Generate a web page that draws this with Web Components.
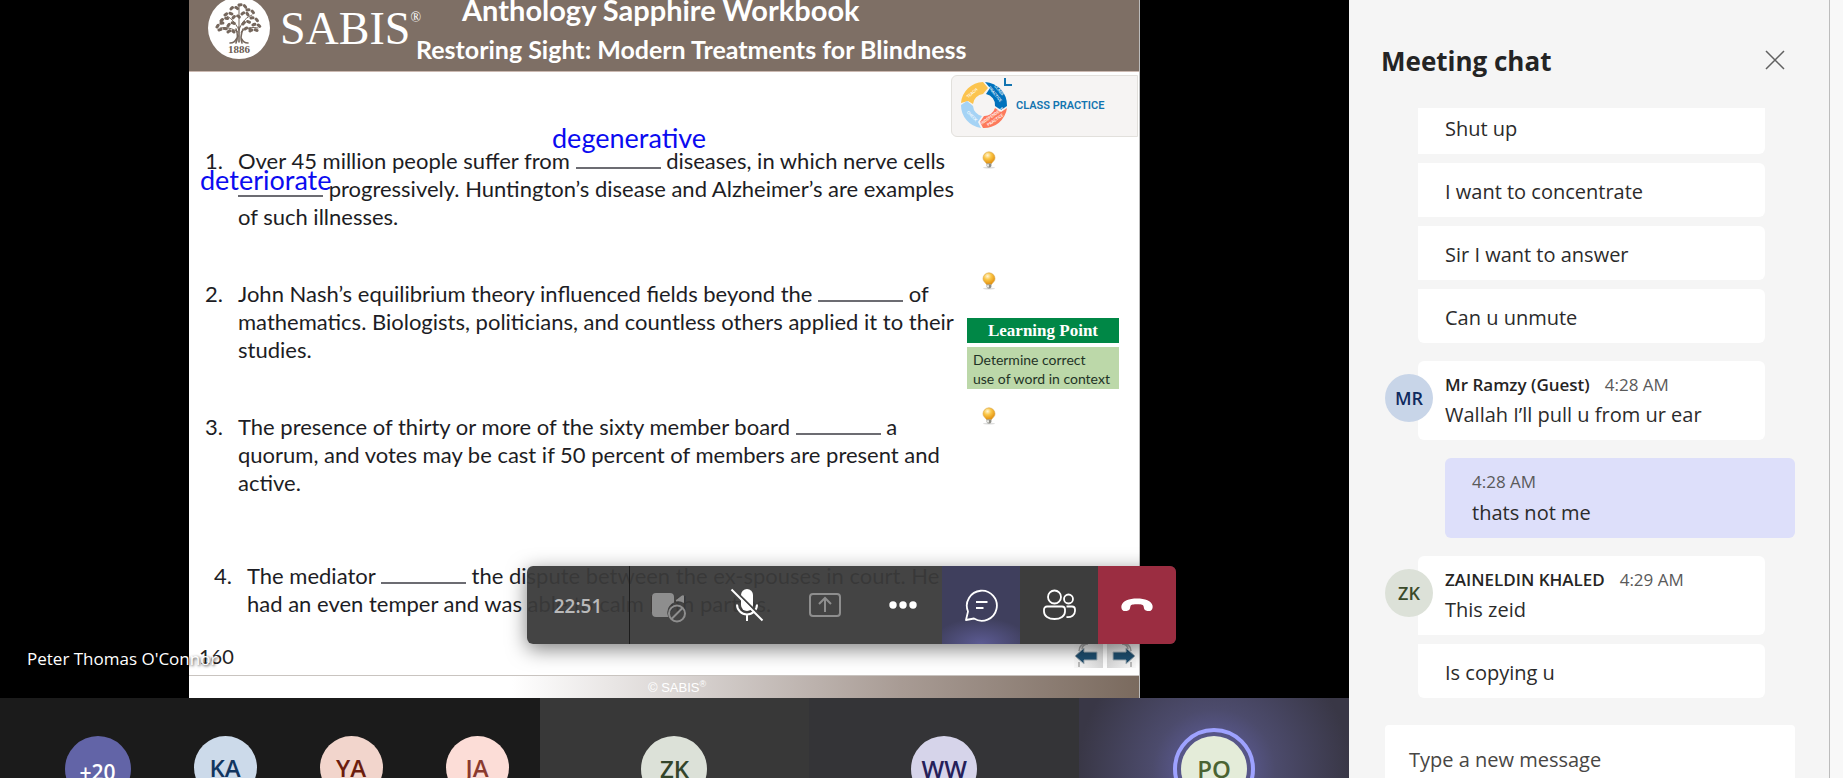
<!DOCTYPE html>
<html lang="en">
<head>
<meta charset="utf-8">
<title>Meeting</title>
<style>
html, body { margin: 0; height: 100%; }
body { font-family: "Open Sans", "Noto Sans", sans-serif; overflow: hidden; background: #f8f8f8; }
</style>
</head>
<body>
<meeting-app></meeting-app>

<script>
function define(name, html) {
  const template = document.createElement('template');
  template.innerHTML = html;
  customElements.define(name, class extends HTMLElement {
    constructor() {
      super();
      this.attachShadow({ mode: 'open' }).appendChild(template.content.cloneNode(true));
    }
  });
}

/* ---------- Small pieces ---------- */

define('hint-bulb', `
<style>
:host { display: block; }
button { display: block; padding: 0; border: 0; background: none; width: 16px; height: 18px; }
svg { display: block; }
</style>
<button type="button" aria-label="Show hint">
<svg width="16" height="18" viewBox="0 0 16 18">
  <defs><radialGradient id="g" cx=".38" cy=".3" r=".75"><stop offset="0" stop-color="#fff6d8"/><stop offset=".4" stop-color="#fbc747"/><stop offset="1" stop-color="#e08a08"/></radialGradient></defs>
  <ellipse cx="8" cy="16.6" rx="6" ry="1" fill="#ddd"/>
  <path d="M8 .8a6 6 0 0 0-6 6c0 2.600 2.200 3.800 3.400 5.600h5.200C11.800 10.600 14 9.400 14 6.800a6 6 0 0 0-6-6z" fill="url(#g)" stroke="#d9a84e" stroke-width=".6"/>
  <path d="M5.600 12.400h4.800v2.600L9.200 16.600H6.800L5.600 15z" fill="#8d8d86"/><path d="M6 13.200h2v2.400H6z" fill="#e8e8e4"/>
</svg></button>`);

define('fill-blank', `
<style>
:host { display: inline-block; width: 85px; height: 16px; border-bottom: 2px solid #6c6c72; box-sizing: border-box; }
</style>`);

define('quiz-question', `
<style>
:host { display: grid; grid-template-columns: 33px 1fr; margin-left: 16px; color: #1d1d24;
  font: 22px/28px Lato, Carlito, sans-serif; white-space: nowrap; }
:host([indent]) { margin-left: 25px; }
</style>
<span><slot name="number"></slot></span><div><slot></slot></div>`);

define('class-practice', `
<style>
:host { display: flex; align-items: center; box-sizing: border-box; height: 62px; padding-left: 8px;
  background: #f6f4f3; border: 1px solid #e2e0dc; border-radius: 6px 0 0 6px; font: 600 11px/16px Roboto, sans-serif; color: #1374b0; }
svg { display: block; }
text { font: 500 4px Roboto, sans-serif; fill: #fff; text-anchor: middle; }
</style>
<svg width="56" height="58" viewBox="-24 -28 56 58">
  <path d="M-23-2A23 23 0 0 1-1-23L4-17-1-11A11 11 0 0 0-11-1L-16-4z" fill="#fcc44f"/>
  <path d="M1-23A23 23 0 0 1 23 1L17 5 11 1A11 11 0 0 0 2-11L6-17z" fill="#0071bc"/>
  <path d="M23 3A23 23 0 0 1-1 23L-4 17 0 11A11 11 0 0 0 11 3L17 7z" fill="#fd7a5c"/>
  <path d="M-3 23A23 23 0 0 1-23 0L-17-4-11 1A11 11 0 0 0-2 11L-6 17z" fill="#a5d3f5"/>
  <text transform="translate(-11 -11) rotate(-42)">TEACH</text>
  <text transform="translate(14 -14) rotate(50)">CLASS</text>
  <text transform="translate(10 -10) rotate(50)">PRACTICE</text>
  <text transform="translate(9 12) rotate(-35)">INDEPENDENT</text>
  <text transform="translate(12 16) rotate(-35)">PRACTICE</text>
  <text transform="translate(-13 12) rotate(45)">CHECK</text>
  <path d="M21-27V-20H28" fill="none" stroke="#1374b0" stroke-width="2"/>
</svg>
<span><slot></slot></span>`);

define('learning-point', `
<style>
:host { display: flex; flex-direction: column; gap: 4px; width: 152px; }
h3 { margin: 0; background: #008746; color: #fff; text-align: center; font: bold 17px/25px "Liberation Serif", serif; }
p { margin: 0; padding: 3px 6px 1px; height: 38px; background: #bcd8a9; color: #1f3326; font: 14px/19px Lato, sans-serif; white-space: nowrap; }
</style>
<h3><slot name="title"></slot></h3>
<p><slot></slot></p>`);

define('slide-header', `
<style>
:host { display: flex; align-items: flex-start; box-sizing: border-box; height: 72px; padding-left: 19px; overflow: hidden;
  background: #7e6f65; border-bottom: 1px solid #cbb9b1; color: #fff; white-space: nowrap; flex: none; }
.seal { flex: none; margin-top: -4px; display: block; }
.seal text { font: bold 11px "Liberation Serif", serif; fill: #6b5d53; text-anchor: middle; }
.brand { margin: 0 0 0 10px; width: 136px; flex: none; font: 46px/46px "Liberation Serif", serif; padding-top: 6px; display: flex; align-items: flex-start; }
sup { font-size: 14px; line-height: 14px; padding-top: 5px; }
.titles { margin-top: -10px; }
h1 { margin: 0; padding-left: 46px; font: bold 29px/40px Lato, sans-serif; }
h2 { margin: 0; font: bold 25px/38px Lato, sans-serif; }
</style>
<svg class="seal" width="62" height="64" viewBox="0 0 62 64" aria-label="SABIS seal">
  <circle cx="31" cy="32" r="31" fill="#fff"/>
  <g fill="none" stroke="#75675d" stroke-linecap="round">
    <path d="M28 47c2-5 2-9 0-14M34 47c-2-5-1-9 1-14M31 46v-15M22 47c4 0 5-2 7-5M40 47c-4 0-5-2-7-5" stroke-width="1.600"/>
    <path d="M30 36c-6-4-12-5-18-4M33 36c5-5 12-5 17-4M31 34c-4-8-9-13-14-15M31 34c3-9 8-13 13-15M31 33V10" stroke-width="1"/>
    <path d="M9 31c2-4 6-5 8-3M11 34c3-1 5-2 8-1M13 25c3-4 7-3 9-1M17 19c3-3 6-2 8 0M23 13c2-3 5-2 7 0M31 9c3-1 6 0 7 3M39 14c3-1 6 1 7 4M43 22c3-1 6 1 7 4M45 29c3-2 7 0 8 4M42 35c3-2 6-2 9 1M20 30c2-4 6-4 8-1M35 28c3-4 6-3 8 0M25 22c2-3 5-3 7 0M34 18c2-2 5-2 6 1M20 36c2-2 4-2 6 0M37 33c2-2 4-1 6 1" stroke-width="3" stroke-dasharray="2 3.500"/>
  </g>
  <text x="31" y="57">1886</text>
</svg>
<div class="brand">SABIS<sup>®</sup></div>
<div class="titles"><h1><slot name="title"></slot></h1><h2><slot name="subtitle"></slot></h2></div>`);

define('lesson-slide', `
<style>
:host { display: flex; flex-direction: column; height: 100%; box-sizing: border-box; background: #fff; border-right: 1px solid #bbb; position: relative; }
.main { flex: 1; min-height: 0; display: grid; grid-template-columns: 762px 1fr; }
.questions { padding-top: 75px; display: flex; flex-direction: column; gap: 49px; }
.last { margin-top: 16px; }
.side { padding: 3px 1px 0 0; display: flex; flex-direction: column; }
.side hint-bulb { margin: 14px 0 0 30px; }
.side hint-bulb.second { margin-top: 103px; }
learning-point { margin: 28px 0 4px 16px; }
.ink { position: absolute; color: #0b0bf0; font: 27px/32px Lato, sans-serif; }
.ink.a { left: 363px; top: 122px; }
.ink.b { left: 11px; top: 164px; }
.page { flex: none; height: 33px; display: flex; justify-content: space-between; padding: 0 3px 0 10px; color: #222; font: 20px/28px Lato, sans-serif; }
nav { display: flex; gap: 4px; }
nav button { border: 0; padding: 0; width: 29px; height: 26px; background: linear-gradient(100deg, #fff, #d8d8d8); }
nav button + button { background: linear-gradient(260deg, #fff, #d8d8d8); }
svg { display: block; }
footer { flex: none; height: 23px; padding-left: 459px; color: #fff; font: 13px/23px "Liberation Sans", sans-serif;
  background: linear-gradient(90deg, #fff 34%, #d9d4d2 52%, #a89b94 75%, #7a6a5e); border-top: 1px solid #c9c4c0; box-sizing: border-box; }
footer sup { font-size: 9px; line-height: 1px; }
</style>
<slide-header><span slot="title">Anthology Sapphire Workbook</span><span slot="subtitle">Restoring Sight: Modern Treatments for Blindness</span></slide-header>
<div class="main">
  <div class="questions">
    <quiz-question><span slot="number">1.</span>Over 45 million people suffer from <fill-blank></fill-blank> diseases, in which nerve cells<br><fill-blank></fill-blank> progressively. Huntington’s disease and Alzheimer’s are examples<br>of such illnesses.</quiz-question>
    <quiz-question><span slot="number">2.</span>John Nash’s equilibrium theory influenced fields beyond the <fill-blank></fill-blank> of<br>mathematics. Biologists, politicians, and countless others applied it to their<br>studies.</quiz-question>
    <quiz-question><span slot="number">3.</span>The presence of thirty or more of the sixty member board <fill-blank></fill-blank> a<br>quorum, and votes may be cast if 50 percent of members are present and<br>active.</quiz-question>
    <quiz-question class="last" indent><span slot="number">4.</span>The mediator <fill-blank></fill-blank> the dispute between the ex-spouses in court. He<br>had an even temper and was able to calm both parties.</quiz-question>
  </div>
  <div class="side">
    <class-practice>CLASS PRACTICE</class-practice>
    <hint-bulb></hint-bulb>
    <hint-bulb class="second"></hint-bulb>
    <learning-point><span slot="title">Learning Point</span>Determine correct<br>use of word in context</learning-point>
    <hint-bulb></hint-bulb>
  </div>
</div>
<div class="page"><span>160</span>
  <nav>
    <button type="button" aria-label="Previous page"><svg width="29" height="26" viewBox="0 0 29 26"><path d="M5 9c0-5 4-8 9-8M8 7c0-3 3-5 6-5M5 20v5" fill="none" stroke="#a9a9a9" stroke-width="1.500"/><path d="M1 14l9-8v4h13v8H10v4z" fill="#1f4f70" stroke="#aab4ba"/></svg></button>
    <button type="button" aria-label="Next page"><svg width="29" height="26" viewBox="0 0 29 26"><path d="M24 9c0-5-4-8-9-8M21 7c0-3-3-5-6-5M24 20v5" fill="none" stroke="#a9a9a9" stroke-width="1.500"/><path d="M28 14l-9-8v4H6v8h13v4z" fill="#1f4f70" stroke="#aab4ba"/></svg></button>
  </nav>
</div>
<footer>© SABIS<sup>®</sup></footer>
<span class="ink a">degenerative</span>
<span class="ink b">deteriorate</span>`);

/* ---------- Call controls ---------- */

define('call-toolbar', `
<style>
:host { display: flex; height: 78px; border-radius: 6px; overflow: hidden; background: rgba(58, 58, 58, .95); box-shadow: 0 5px 20px rgba(0, 0, 0, .5); }
time { width: 102px; border-right: 1px solid #1c1c1c; text-align: center; color: #b9b9b9; font: 600 19px/80px "Open Sans", sans-serif; }
button { width: 78px; border: 0; padding: 0; background: none; display: flex; align-items: center; justify-content: center; color: #fff; }
.off { color: #8e8e8e; }
.chat { background: radial-gradient(ellipse 50px 26px at 50% 100%, #5c5b93, transparent), #3f3f5d; }
.people { background: #3d3d3d; }
.hang { background: #9b2d41; }
svg { display: block; }
</style>
<time>22:51</time>
<button type="button" class="off" aria-label="Camera unavailable"><svg width="36" height="36" viewBox="0 0 36 36"><path d="M5 6h14a4 4 0 0 1 4 4v5.500a11 11 0 0 0-5.800 14.500H5a4 4 0 0 1-4-4V10a4 4 0 0 1 4-4zM25 13l6-4.500q2-1 2 1V16a11 11 0 0 0-8-1.500z" fill="currentColor"/><circle cx="26" cy="26.500" r="8" fill="none" stroke="currentColor" stroke-width="2"/><path d="M20.500 32L31.500 21" stroke="currentColor" stroke-width="2"/></svg></button>
<button type="button" aria-label="Unmute"><svg width="36" height="36" viewBox="0 0 36 36"><rect x="12" y="2" width="12" height="22" rx="6" fill="currentColor"/><path d="M8 17.500a10 10 0 0 0 20 0M18 27.500V34" fill="none" stroke="currentColor" stroke-width="2"/><path d="M3.500 1L34.500 32" stroke="#444" stroke-width="2"/><path d="M2.500 2.500L33.500 33.500" stroke="currentColor" stroke-width="2"/></svg></button>
<button type="button" class="off" aria-label="Share"><svg width="34" height="36" viewBox="0 0 34 36"><rect x="2" y="7" width="30" height="22" rx="3" fill="none" stroke="currentColor" stroke-width="2"/><path d="M17 25V11M11 17l6-6 6 6" fill="none" stroke="currentColor" stroke-width="2"/></svg></button>
<button type="button" aria-label="More actions"><svg width="28" height="8" viewBox="0 0 28 8"><g fill="currentColor"><circle cx="4" cy="4" r="3.700"/><circle cx="14" cy="4" r="3.700"/><circle cx="24" cy="4" r="3.700"/></g></svg></button>
<button type="button" class="chat" aria-label="Chat"><svg width="34" height="34" viewBox="0 0 34 34" fill="none" stroke="currentColor" stroke-width="1.800"><path d="M2 32l2-8.500A15 15 0 1 1 10 30.500z" stroke-linejoin="round"/><path d="M12 14h11.500M12 20h7.500" stroke-width="2"/></svg></button>
<button type="button" class="people" aria-label="People"><svg width="34" height="34" viewBox="0 0 34 34" fill="none" stroke="currentColor" stroke-width="1.800"><circle cx="12.500" cy="9" r="6.500"/><circle cx="26.500" cy="11" r="4.500"/><path d="M5 18.500h15a3 3 0 0 1 3 3v2c0 4.500-4.500 7.500-10.500 7.500S2 28 2 23.500v-2a3 3 0 0 1 3-3zM24.500 18.500H30a3 3 0 0 1 3 3v1.500c0 4-3.500 6.500-8.500 6"/></svg></button>
<button type="button" class="hang" aria-label="Leave"><svg width="34" height="16" viewBox="0 0 34 16"><path d="M17 1.500c8 0 14.500 2.500 15.500 7 .6 3-.7 5.600-3.500 5.600-2.500 0-4-.6-4.800-2l-.7-3C23 7.500 20 7.300 17 7.300s-6 .2-6.500 1.800l-.7 3c-.8 1.400-2.300 2-4.800 2-2.800 0-4.100-2.600-3.500-5.600 1-4.500 7.500-7 15.500-7z" fill="currentColor"/></svg></button>`);

/* ---------- Participants ---------- */

define('user-avatar', `
<style>
:host { display: flex; align-items: center; justify-content: center; flex: none; box-sizing: border-box; border-radius: 50%;
  width: var(--size, 66px); height: var(--size, 66px); background: var(--bg); color: var(--fg);
  font: 600 var(--text, 24px)/32px "Open Sans", sans-serif; }
:host([speaking]) { outline: 4px solid #9ea2ff; outline-offset: 4px; }
</style><slot></slot>`);

define('participant-tile', `
<style>
:host { display: flex; justify-content: center; align-items: flex-start; padding-top: 38px; background: var(--tile, #383838); box-sizing: border-box; }
:host([wide]) { justify-content: flex-end; gap: 63px; padding-right: 31px; background: #1b1b1b; }
:host([speaking]) { background: radial-gradient(circle 136px at 50% 72px, #5a5990 20%, #4c4b6c 45%, #393746); }
</style><slot></slot>`);

define('participant-strip', `
<style>
:host { display: grid; grid-template-columns: 2fr 1fr 1fr 1fr; flex: none; height: 80px; overflow: hidden; }
.more { --text: 21px; --bg: #6264a7; --fg: #fff; padding-top: 5px; }
.ka { --size: 63px; --bg: #ccdaea; --fg: #12355f; } .ya { --size: 63px; --bg: #f2d5cc; --fg: #6b1d0e; } .ja { --size: 63px; --bg: #fcddd7; --fg: #8a3a2e; }
.zk { --bg: #dce1d8; --fg: #33452a; } .ww { --bg: #d6d4ea; --fg: #252059; } .po { --bg: #e4ecd9; --fg: #4a6332; }
.dim { --tile: #343437; }
</style>
<participant-tile wide>
  <user-avatar class="more">+20</user-avatar><user-avatar class="ka">KA</user-avatar><user-avatar class="ya">YA</user-avatar><user-avatar class="ja">JA</user-avatar>
</participant-tile>
<participant-tile><user-avatar class="zk">ZK</user-avatar></participant-tile>
<participant-tile class="dim"><user-avatar class="ww">WW</user-avatar></participant-tile>
<participant-tile speaking><user-avatar class="po" speaking>PO</user-avatar></participant-tile>`);

define('meeting-stage', `
<style>
:host { display: block; flex: 1; min-height: 0; position: relative; background: #000; padding: 0 209px 0 189px; }
.presenter { position: absolute; left: 27px; bottom: 27px; color: #fff; font: 17px/24px "Open Sans", sans-serif; text-shadow: 1px 1px 3px rgba(0, 0, 0, .8); }
call-toolbar { position: absolute; right: 173px; bottom: 54px; }
</style>
<lesson-slide></lesson-slide>
<span class="presenter">Peter Thomas O'Connor</span>
<call-toolbar></call-toolbar>`);

/* ---------- Chat ---------- */

define('chat-message', `
<style>
:host { display: block; position: relative; margin: 9px 64px 0 69px; padding: 15px 27px 12px; background: #fff; color: #2b2b2b;
  border-radius: 0 6px 6px 0; font: 20px/27px "Open Sans", sans-serif; }
:host([first]) { margin-top: 18px; padding-top: 12px; border-top-left-radius: 6px; }
:host([last]) { border-bottom-left-radius: 6px; }
:host([own]) { margin-left: 96px; margin-right: 34px; background: #dddffa; }
header { display: flex; gap: 15px; font-size: 17px; line-height: 24px; margin-bottom: 4px; color: #5a5a5a; }
:host([own]) header { margin-bottom: 5px; }
:host(:not([first])) header { display: none; }
b { font-weight: 600; color: #252423; }
:host([own]) b { display: none; }
::slotted(user-avatar) { position: absolute; left: -33px; top: 13px; --size: 48px; --text: 18px; }
</style>
<slot name="avatar"></slot>
<header><b><slot name="name"></slot></b><slot name="time"></slot></header>
<slot></slot>`);

define('chat-compose', `
<style>
:host { display: block; flex: none; height: 53px; overflow: hidden; margin: 0 34px 0 36px; }
textarea { display: block; width: 100%; height: 81px; box-sizing: border-box; border: 0; border-radius: 4px; resize: none; padding: 21px 24px;
  background: #fff; font: 20px/27px "Open Sans", sans-serif; }
textarea::placeholder { color: #484644; opacity: 1; }
</style>
<textarea aria-label="Type a new message" placeholder="Type a new message"></textarea>`);

define('meeting-chat', `
<style>
:host { display: flex; flex-direction: column; height: 100%; background: #f5f5f5; border-right: 1px solid #bcbcbc; overflow: hidden; }
.top { flex: none; height: 108px; box-sizing: border-box; padding: 43px 44px 0 32px; display: flex; justify-content: space-between; align-items: flex-start; }
h2 { margin: 0; font: bold 26px/36px "Open Sans", sans-serif; color: #242424; }
button { border: 0; padding: 7px 0; background: none; }
svg { display: block; }
.list { flex: 1; min-height: 0; overflow: hidden; display: flex; flex-direction: column; justify-content: flex-end; padding-bottom: 27px; }
.mr { --bg: #c8d5e8; --fg: #0f2a5e; } .zk { --bg: #dce1d8; --fg: #3b4a2a; }
</style>
<div class="top"><h2>Meeting chat</h2><button type="button" aria-label="Close"><svg width="20" height="20" viewBox="0 0 20 20"><path d="M1 1l18 18M19 1L1 19" stroke="#616161" stroke-width="1.500"/></svg></button></div>
<div class="list">
  <chat-message>Shut up</chat-message>
  <chat-message>I want to concentrate</chat-message>
  <chat-message>Sir I want to answer</chat-message>
  <chat-message last>Can u unmute</chat-message>
  <chat-message first last><user-avatar slot="avatar" class="mr">MR</user-avatar><span slot="name">Mr Ramzy (Guest)</span><span slot="time">4:28 AM</span>Wallah I’ll pull u from ur ear</chat-message>
  <chat-message first last own><span slot="time">4:28 AM</span>thats not me</chat-message>
  <chat-message first><user-avatar slot="avatar" class="zk">ZK</user-avatar><span slot="name">ZAINELDIN KHALED</span><span slot="time">4:29 AM</span>This zeid</chat-message>
  <chat-message last>Is copying u</chat-message>
</div>
<chat-compose></chat-compose>`);

define('meeting-app', `
<style>
:host { display: grid; grid-template-columns: minmax(0, 1fr) 481px; height: 100vh; padding-right: 13px; box-sizing: border-box; background: #f8f8f8; }
main { display: flex; flex-direction: column; min-width: 0; min-height: 0; }
meeting-chat { min-height: 0; box-sizing: border-box; }
</style>
<main><meeting-stage></meeting-stage><participant-strip></participant-strip></main>
<meeting-chat></meeting-chat>`);
</script>
</body>
</html>
